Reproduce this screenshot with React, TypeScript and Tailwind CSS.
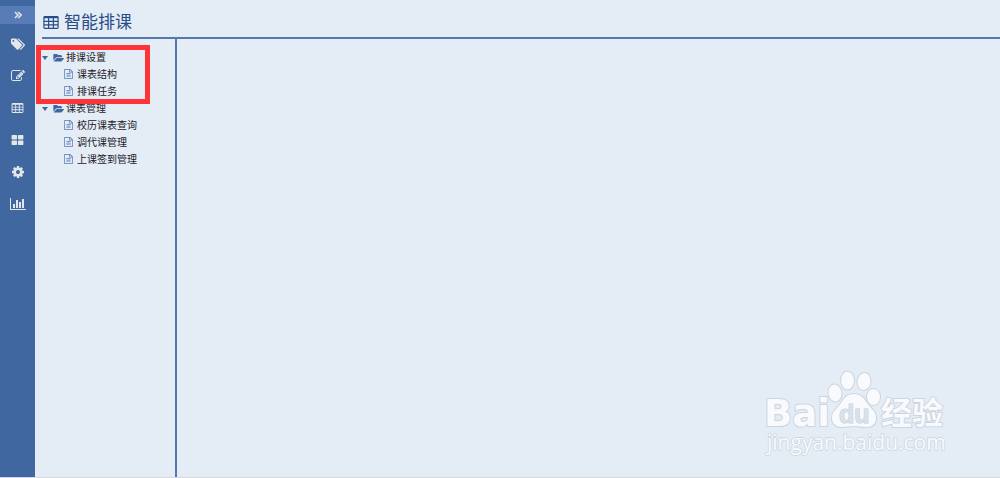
import React from 'react';

type IconProps = { className?: string };

const Glyph = ({ box, className, children }: IconProps & { box: string; children: React.ReactNode }) => (
  <svg viewBox={box} className={className} fill="currentColor" aria-hidden="true">
    {children}
  </svg>
);

const DoubleAngle = ({ className }: IconProps) => (
  <svg viewBox="0 0 10 10" className={className} fill="none" stroke="currentColor" strokeWidth="2" aria-hidden="true">
    <path d="M1.2 1.2 5 5 1.2 8.8M5.2 1.2 9 5 5.2 8.8" />
  </svg>
);

const Tags = ({ className }: IconProps) => (
  <Glyph box="0 64 1899 1600" className={className}>
    <path d="M448 448q0-53-37.500-90.500t-90.500-37.500-90.500 37.500-37.500 90.500 37.500 90.500 90.500 37.500 90.500-37.500 37.500-90.500zm1067 576q0 53-37 90l-491 492q-39 37-91 37-53 0-90-37l-715-716q-38-37-64.500-101t-26.500-117v-416q0-52 38-90t90-38h416q53 0 117 26.500t102 64.500l715 714q37 39 37 91zm384 0q0 53-37 90l-491 492q-39 37-91 37-36 0-59-14t-53-45l470-470q37-37 37-90 0-52-37-91l-715-714q-38-38-102-64.500t-117-26.500h224q53 0 117 26.500t102 64.500l715 714q37 39 37 91z" />
  </Glyph>
);

const Edit = ({ className }: IconProps) => (
  <Glyph box="0 128 1792 1536" className={className}>
    <path d="M888 1184l116-116-152-152-116 116v56h96v96h56zm440-720q-16-16-33 1l-350 350q-17 17-1 33t33-1l350-350q17-17 1-33zm80 594v190q0 119-84.500 203.500t-203.500 84.500h-832q-119 0-203.500-84.500t-84.500-203.500v-832q0-119 84.500-203.500t203.500-84.500h832q63 0 117 25 15 7 18 23 3 17-9 29l-49 49q-14 14-32 8-23-6-45-6h-832q-66 0-113 47t-47 113v832q0 66 47 113t113 47h832q66 0 113-47t47-113v-126q0-13 9-22l64-64q15-15 35-7t20 29zm-96-738l288 288-672 672h-288v-288zm444 132l-92 92-288-288 92-92q28-28 68-28t68 28l152 152q28 28 28 68t-28 68z" />
  </Glyph>
);

const Table = ({ className }: IconProps) => (
  <Glyph box="0 0 26 22" className={className}>
    <path
      fillRule="evenodd"
      d="M2.500 0h21a2.500 2.500 0 0 1 2.500 2.500v17a2.500 2.500 0 0 1-2.500 2.500h-21a2.500 2.500 0 0 1-2.500-2.500v-17a2.500 2.500 0 0 1 2.500-2.500zM2 4h6v4h-6zM10 4h6v4h-6zM18 4h6v4h-6zM2 10h6v4h-6zM10 10h6v4h-6zM18 10h6v4h-6zM2 16h6v4h-6zM10 16h6v4h-6zM18 16h6v4h-6z"
    />
  </Glyph>
);

const Blocks = ({ className }: IconProps) => (
  <Glyph box="0 0 26 22" className={className}>
    <rect width="12" height="10" rx="1.500" />
    <rect x="14" width="12" height="10" rx="1.500" />
    <rect y="12" width="12" height="10" rx="1.500" />
    <rect x="14" y="12" width="12" height="10" rx="1.500" />
  </Glyph>
);

const Cog = ({ className }: IconProps) => (
  <Glyph box="128 128 1536 1536" className={className}>
    <path d="M1152 896q0-106-75-181t-181-75-181 75-75 181 75 181 181 75 181-75 75-181zm512-109v222q0 12-8 23t-20 13l-185 28q-19 54-39 91 35 50 107 138 10 12 10 25t-9 23q-27 37-99 108t-94 71q-12 0-26-9l-138-108q-44 23-91 38-16 136-29 186-7 28-36 28h-222q-14 0-24.500-8.500t-11.500-21.500l-28-184q-49-16-90-37l-141 107q-10 9-25 9-14 0-25-11-126-114-165-168-7-10-7-23 0-12 8-23 15-21 51-66.500t54-70.500q-27-50-41-99l-183-27q-13-2-21-12.500t-8-23.500v-222q0-12 8-23t19-13l186-28q14-46 39-92-40-57-107-138-10-12-10-24 0-10 9-23 26-36 98.500-107.500t94.500-71.500q13 0 26 10l138 107q44-23 91-38 16-136 29-186 7-28 36-28h222q14 0 24.500 8.500t11.500 21.500l28 184q49 16 90 37l142-107q9-9 24-9 13 0 25 10 129 119 165 170 7 8 7 22 0 12-8 23-15 21-51 66.500t-54 70.500q26 50 41 98l183 28q13 2 21 12.500t8 23.500z" />
  </Glyph>
);

const Bars = ({ className }: IconProps) => (
  <Glyph box="0 128 2048 1536" className={className}>
    <path d="M640 896v512h-256v-512h256zm384-512v1024h-256v-1024h256zm1024 1152v128h-2048v-1536h128v1408h1920zm-640-896v768h-256v-768h256zm384-384v1152h-256v-1152h256z" />
  </Glyph>
);

const FolderOpen = ({ className }: IconProps) => (
  <Glyph box="0 256 1943 1280" className={className}>
    <path d="M1943 952q0 31-31 66l-336 396q-43 51-120.500 86.500t-143.500 35.500h-1088q-34 0-60.500-13t-26.500-43q0-31 31-66l336-396q43-51 120.500-86.500t143.500-35.500h1088q34 0 60.500 13t26.500 43zm-343-344v160h-832q-94 0-197 47.500t-164 119.500l-337 396-5 6q0-4-.5-12.500t-.5-12.500v-960q0-92 66-158t158-66h320q92 0 158 66t66 158v32h544q92 0 158 66t66 158z" />
  </Glyph>
);

const FileText = ({ className }: IconProps) => (
  <Glyph box="128 0 1536 1792" className={className}>
    <path d="M1596 380q28 28 48 76t20 88v1152q0 40-28 68t-68 28h-1344q-40 0-68-28t-28-68v-1600q0-40 28-68t68-28h896q40 0 88 20t76 48zm-444-244v376h376q-10-29-22-41l-313-313q-12-12-41-22zm384 1528v-1024h-416q-40 0-68-28t-28-68v-416h-768v1536h1280zm-1024-864q0-14 9-23t23-9h704q14 0 23 9t9 23v64q0 14-9 23t-23 9h-704q-14 0-23-9t-9-23v-64zm736 224q14 0 23 9t9 23v64q0 14-9 23t-23 9h-704q-14 0-23-9t-9-23v-64q0-14 9-23t23-9h704zm0 256q14 0 23 9t9 23v64q0 14-9 23t-23 9h-704q-14 0-23-9t-9-23v-64q0-14 9-23t23-9h704z" />
  </Glyph>
);

const railItems = [
  { label: '标签', icon: <Tags className="h-3 w-[14px]" /> },
  { label: '编辑', icon: <Edit className="h-3 w-[14px]" /> },
  { label: '课表', icon: <Table className="h-[10px] w-[13px]" /> },
  { label: '模块', icon: <Blocks className="h-[10px] w-[13px]" /> },
  { label: '设置', icon: <Cog className="size-3" /> },
  { label: '统计', icon: <Bars className="h-3 w-4" /> },
];

const tree = [
  { name: '排课设置', pages: ['课表结构', '排课任务'] },
  { name: '课表管理', pages: ['校历课表查询', '调代课管理', '上课签到管理'] },
];

const Watermark = () => (
  <svg
    viewBox="0 0 190 96"
    className="pointer-events-none absolute right-[50px] bottom-[14px] h-24 w-[190px]"
    fill="#f8fafe"
    stroke="#ccd5dd"
    strokeWidth="2"
    strokeLinejoin="round"
    paintOrder="stroke"
    fontFamily='"Open Sans", "Noto Sans CJK SC", sans-serif'
    aria-label="Baidu 经验"
  >
    <text x="4" y="59" fontSize="37" fontWeight="700" fontFamily='"DejaVu Sans", sans-serif'>Bai</text>
    <ellipse cx="75" cy="26" rx="6.500" ry="8.500" transform="rotate(-8 75 26)" />
    <ellipse cx="87.500" cy="13.500" rx="6.500" ry="9" />
    <ellipse cx="104" cy="14.500" rx="6.500" ry="8.500" transform="rotate(8 104 14.500)" />
    <ellipse cx="113.500" cy="30" rx="6.500" ry="8" />
    <path d="M94 27c-7 0-10 4-13 9-4 6-9 8-9 15 0 6 4 9 10 9 4 0 8-1 12-1s8 1 12 1c6 0 10-3 10-9 0-7-5-9-9-15-3-5-6-9-13-9z" />
    <text x="79" y="56" fontSize="25" fontWeight="700" fill="#d9e1ea" stroke="#c3ccd6" strokeWidth="1" fontFamily='"Liberation Sans", sans-serif'>du</text>
    <text x="121" y="57" fontSize="31" fontWeight="700" fontFamily='"Noto Sans CJK SC", sans-serif'>经验</text>
    <text x="7" y="83" fontSize="21" strokeWidth="1.500">jingyan.baidu.com</text>
  </svg>
);

export default function App() {
  return (
    <div className="relative flex min-h-screen border-b border-[#d8dade] bg-[#e4ecf6] font-['Liberation_Sans','Noto_Sans_CJK_SC',sans-serif]">
      <nav className="flex w-[35px] shrink-0 flex-col bg-[#4067a0] pt-[6px] text-[#e4e6e8]">
        <button type="button" aria-label="展开" className="mb-[11px] flex h-[18px] items-center justify-center bg-[#587cb7]">
          <DoubleAngle className="size-2" />
        </button>
        {railItems.map((item) => (
          <button key={item.label} type="button" aria-label={item.label} className="mb-[14px] flex h-[18px] items-center justify-center">
            {item.icon}
          </button>
        ))}
      </nav>

      <div className="flex min-w-0 flex-1 flex-col">
        <header className="ml-[7px] flex h-[39px] items-center gap-[5px] border-b-2 border-[#5279b0] pt-2 pl-px text-[#284c88]">
          <Table className="h-[13px] w-4" />
          <h1 className="text-[17px] leading-6">智能排课</h1>
        </header>

        <div className="flex flex-1">
          <aside className="relative w-[142px] border-r-2 border-[#5279b0] pt-[10px] pl-[7px] text-[10px] leading-[17px] text-[#1c2026]">
            <ul>
              {tree.map((group) => (
                <li key={group.name}>
                  <button type="button" className="flex h-[17px] items-center whitespace-nowrap">
                    <svg viewBox="0 0 6 4" className="mr-[5px] h-1 w-[6px] text-[#4067a0]" fill="currentColor" aria-hidden="true">
                      <path d="M0 0h6L3 4z" />
                    </svg>
                    <FolderOpen className="mr-[2px] h-2 w-[11px] text-[#4067a0]" />
                    {group.name}
                  </button>
                  <ul className="pl-[22px]">
                    {group.pages.map((page) => (
                      <li key={page}>
                        <a href="#" className="flex h-[17px] items-center gap-1 whitespace-nowrap">
                          <FileText className="mb-px h-[10px] w-[9px] text-[#5577b3]" />
                          {page}
                        </a>
                      </li>
                    ))}
                  </ul>
                </li>
              ))}
            </ul>
            <div className="pointer-events-none absolute top-[6px] left-px h-[59px] w-[114px] border-5 border-[#ff3437]" />
          </aside>
          <main className="flex-1" />
        </div>
      </div>

      <Watermark />
    </div>
  );
}
